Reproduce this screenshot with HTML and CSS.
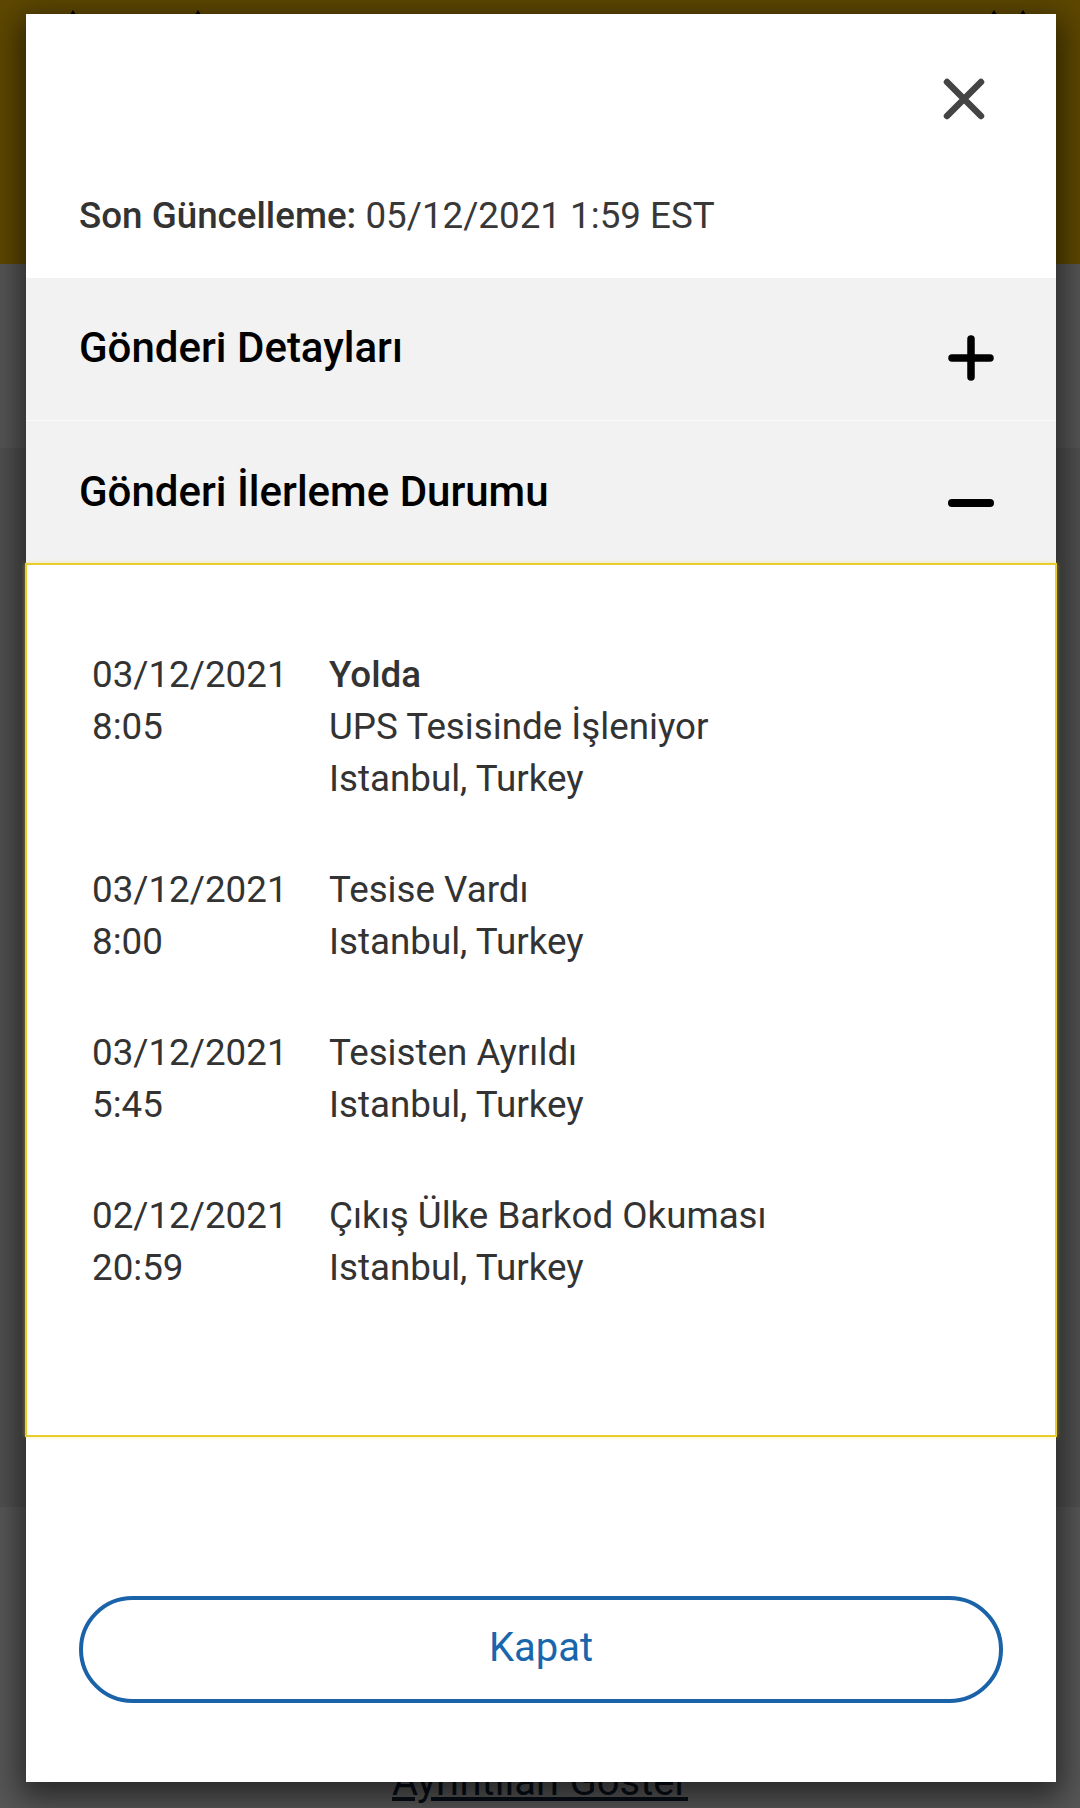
FILE: index.html
```html
<!DOCTYPE html>
<html lang="tr">
<head>
<meta charset="utf-8">
<title>Gönderi İlerleme Durumu</title>
<link rel="stylesheet" href="styles.css">
</head>
<body>
<div class="page">
  <header class="site-header">
    <div class="hdr-group hdr-left">
      <svg class="peek" width="10" height="20" viewBox="0 0 10 20"><polygon points="5,0 10,8 10,20 0,20 0,8"/></svg>
      <svg class="peek" width="10" height="20" viewBox="0 0 10 20"><polygon points="5,0 10,8 10,20 0,20 0,8"/></svg>
    </div>
    <div class="hdr-group hdr-right">
      <svg class="peek" width="10" height="20" viewBox="0 0 10 20"><polygon points="5,0 10,8 10,20 0,20 0,8"/></svg>
      <svg class="peek" width="10" height="20" viewBox="0 0 10 20"><polygon points="5,0 10,8 10,20 0,20 0,8"/></svg>
    </div>
  </header>
  <section class="sec sec-a"></section>
  <section class="sec sec-b"></section>
  <section class="sec sec-c">
    <a class="details-link" href="#">Ayrıntıları Göster</a>
  </section>
</div>

<div class="overlay"></div>

<div class="modal" role="dialog">
  <div class="modal-head">
    <div class="close-row">
      <svg class="close-icon" width="42" height="42" viewBox="0 0 42 42">
        <path d="M4 4 L38 38 M38 4 L4 38" stroke="#444" stroke-width="6.5" stroke-linecap="round"/>
      </svg>
    </div>
    <p class="updated"><b>Son Güncelleme:</b> 05/12/2021 1:59 EST</p>
  </div>

  <div class="acc-row">
    <h2 class="acc-title">Gönderi Detayları</h2>
    <svg class="acc-icon" width="46" height="46" viewBox="0 0 46 46">
      <path d="M23 4 L23 42 M4 23 L42 23" stroke="#000" stroke-width="7.5" stroke-linecap="round"/>
    </svg>
  </div>
  <div class="acc-row acc-open">
    <h2 class="acc-title">Gönderi İlerleme Durumu</h2>
    <svg class="acc-icon acc-minus" width="46" height="46" viewBox="0 0 46 46">
      <path d="M4 23 L42 23" stroke="#000" stroke-width="8" stroke-linecap="round"/>
    </svg>
  </div>

  <div class="panel">
    <div class="entry">
      <div class="when">03/12/2021<br>8:05</div>
      <div class="what"><b>Yolda</b><br>UPS Tesisinde İşleniyor<br>Istanbul, Turkey</div>
    </div>
    <div class="entry">
      <div class="when">03/12/2021<br>8:00</div>
      <div class="what">Tesise Vardı<br>Istanbul, Turkey</div>
    </div>
    <div class="entry">
      <div class="when">03/12/2021<br>5:45</div>
      <div class="what">Tesisten Ayrıldı<br>Istanbul, Turkey</div>
    </div>
    <div class="entry">
      <div class="when">02/12/2021<br>20:59</div>
      <div class="what">Çıkış Ülke Barkod Okuması<br>Istanbul, Turkey</div>
    </div>
  </div>

  <div class="modal-foot">
    <button class="btn-close" type="button">Kapat</button>
  </div>
</div>
</body>
</html>
```

FILE: styles.css
```css
html, body {
  margin: 0;
  padding: 0;
}
body {
  width: 1080px;
  height: 1808px;
  overflow: hidden;
  position: relative;
  font-family: Roboto, "Noto Sans", "Liberation Sans", sans-serif;
  background: #e4e4e4;
}

/* underlying page */
.page {
  display: flex;
  flex-direction: column;
  height: 1808px;
}
.site-header {
  height: 264px;
  background: #ffc400;
  display: flex;
  justify-content: space-between;
  align-items: flex-start;
  padding: 10px 52px 0 68px;
  box-sizing: border-box;
}
.hdr-group {
  display: flex;
}
.hdr-left {
  gap: 115px;
}
.hdr-right {
  gap: 19px;
}
.peek {
  display: block;
  fill: #000;
}
.sec-a {
  height: 184px;
  background: #e8e8e8;
}
.sec-b {
  height: 1059px;
  background: #d9d9d9;
}
.sec-c {
  flex: 1;
  background: #ececec;
  text-align: center;
  padding-top: 251px;
  box-sizing: border-box;
}
.details-link {
  font-size: 40px;
  color: #142640;
  text-decoration: underline;
}

.overlay {
  position: absolute;
  inset: 0;
  background: rgba(0, 0, 0, 0.63);
}

/* modal */
.modal {
  position: absolute;
  left: 26px;
  top: 14px;
  width: 1030px;
  height: 1768px;
  background: #fff;
  display: flex;
  flex-direction: column;
  box-shadow: 0 10px 30px 6px rgba(0, 0, 0, 0.55);
}
.modal-head {
  height: 264px;
  box-sizing: border-box;
  padding: 64px 0 36px 53px;
  display: flex;
  flex-direction: column;
}
.close-row {
  display: flex;
  justify-content: flex-end;
  padding-right: 71px;
}
.close-icon {
  display: block;
}
.updated {
  margin: auto 0 0;
  font-size: 36.75px;
  line-height: 52px;
  color: #383838;
}
.updated b {
  font-weight: 500;
  color: #333;
}

.acc-row {
  height: 142px;
  background: #f2f2f2;
  display: flex;
  justify-content: space-between;
  align-items: center;
  padding: 0 62px 0 53px;
}
.acc-open {
  border-top: 1px solid #f9f9f9;
}
.acc-title {
  margin: 0 0 4px;
  font-size: 42px;
  font-weight: 500;
  color: #000;
}
.acc-open .acc-title {
  margin-bottom: 2px;
}
.acc-icon {
  display: block;
  align-self: flex-start;
  margin-top: 57px;
}
.acc-minus {
  margin-top: 59px;
}

.panel {
  height: 874px;
  box-sizing: border-box;
  margin: 0 -1px;
  border: 2px solid #e9cc2e;
  box-shadow: 0 0 4px rgba(255, 225, 60, 0.45);
  padding: 84px 0 86px 65px;
  background: #fff;
}
.entry {
  display: grid;
  grid-template-columns: 237px 1fr;
  margin-bottom: 59px;
  font-size: 36.75px;
  line-height: 52px;
  color: #333;
}
.entry b {
  font-weight: 500;
}

.modal-foot {
  flex: 1;
  padding: 159px 53px 0;
}
.btn-close {
  display: flex;
  align-items: center;
  justify-content: center;
  width: 100%;
  height: 107px;
  box-sizing: border-box;
  border: 4px solid #1a63a8;
  border-radius: 54px;
  background: #fff;
  color: #1a66ad;
  font-family: Roboto, "Noto Sans", "Liberation Sans", sans-serif;
  font-size: 40px;
  padding: 0 0 4px;
}
```
